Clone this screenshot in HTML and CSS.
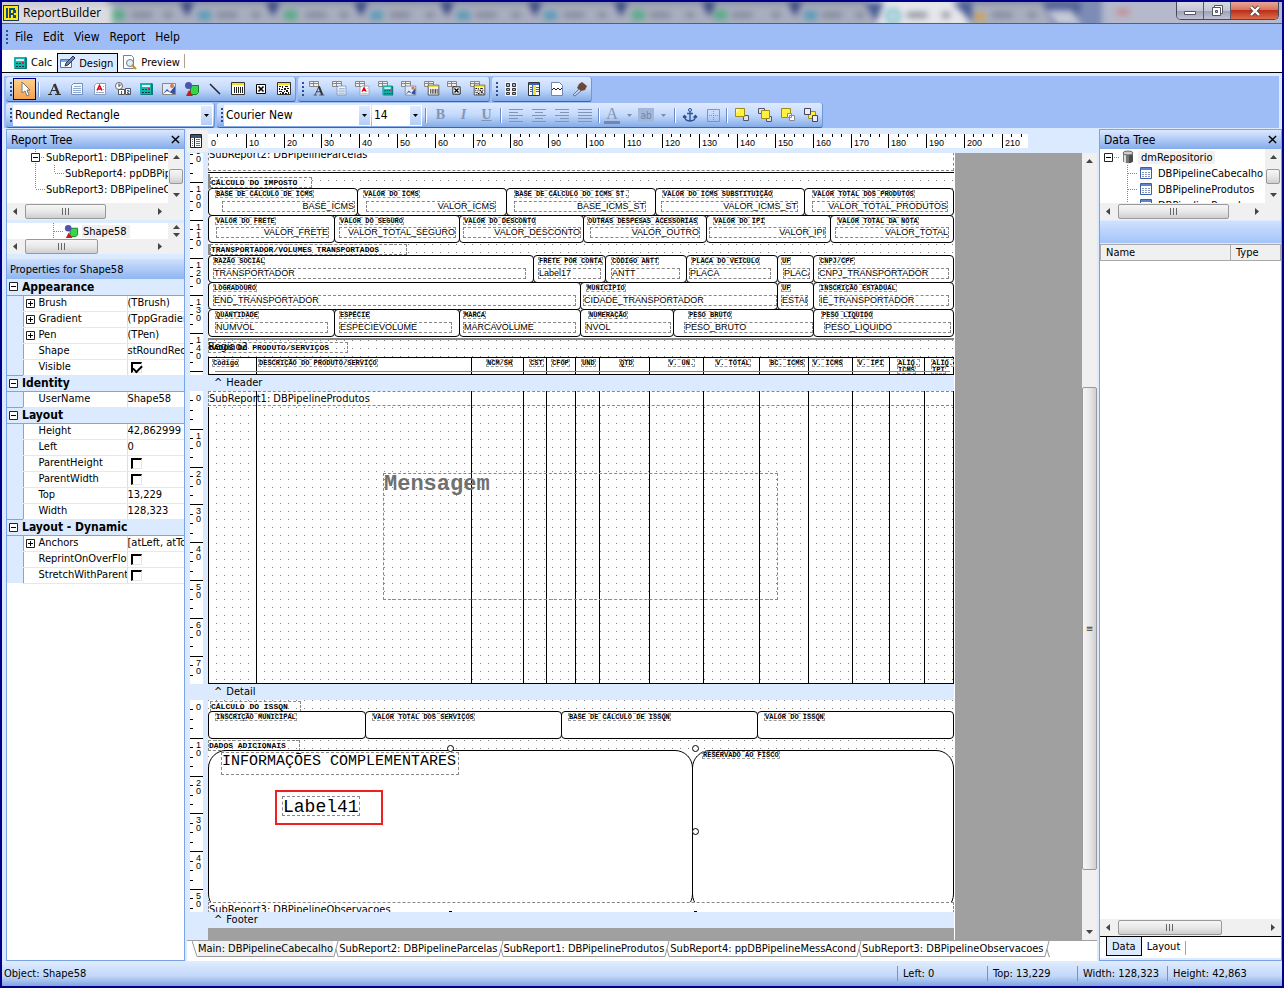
FILE: index.html
```
<!DOCTYPE html>
<html lang="en">
<head>
  <meta charset="UTF-8">
  <meta name="viewport" content="width=device-width, initial-scale=1.0">
  <title>ReportBuilder</title>
  <link rel="stylesheet" href="styles.css">
</head>
<body>
  <svg class="sprite" aria-hidden="true">
    <symbol id="i-cursor" viewBox="0 0 16 16"><path d="M5 1v11l3-2 2 5 2-1-2-5h3z" fill="#fff" stroke="#777" /></symbol>
    <symbol id="i-a" viewBox="0 0 16 16"><path d="M2 13.500h4M9 13.500h6M4 13L8.500 3l4 10M5.500 9.500h5" fill="none" stroke="#333"/><path d="M8.500 3l4 10" stroke="#333" stroke-width="2.500"/></symbol>
    <symbol id="i-memo" viewBox="0 0 16 16"><path d="M4.500 2.500h9v11h-11v-9z" fill="#f4f8ff" stroke="#7390bd"/><path d="M5 5.500h7M4 7.500h8M4 9.500h8M4 11.500h8" stroke="#8fa9d0"/></symbol>
    <symbol id="i-rich" viewBox="0 0 16 16"><path d="M4.500 2.500h9v11h-11v-9z" fill="#fff" stroke="#8c9cb8"/><path d="M4 11.500h8M11 5.500h1M11 8.500h1" stroke="#8fa9d0"/><path d="M5 9.500l2.500-5 2.500 5M6 8h3" fill="none" stroke="#e00010" stroke-width="1.500"/></symbol>
    <symbol id="i-sys" viewBox="0 0 16 16"><circle cx="4" cy="5" r="3.500" fill="#fff" stroke="#666"/><path d="M4 2.500v3l2-2" fill="none" stroke="#333"/><path d="M3.500 8.500h6v5h-6zM10.500 7.500h5v6h-5z" fill="#fff" stroke="#555"/><path d="M6.500 10v3M12 9.500h2v1.500h-1.500v1.500h2" fill="none" stroke="#1d63b5"/></symbol>
    <symbol id="i-calc" viewBox="0 0 16 16"><path d="M2 2h12l1 1v11H3l-1-1z" fill="#0a7c7c"/><path d="M2 2h11v11H2z" fill="#16b3b0"/><path d="M4 4h8v2H4z" fill="#d8fff5"/><path d="M4 8h2v1H4zm3 0h2v1H7zM4 11h2v1H4zm3 0h2v1H7zm3 0h2v1h-2z" fill="#02383c"/><path d="M10 7h2v2h-2z" fill="#e02020"/></symbol>
    <symbol id="i-image" viewBox="0 0 16 16"><path d="M1.500 2.500h13v11h-13z" fill="#dfeaff" stroke="#888"/><path d="M2 13l4-5 3 3 5-6v8z" fill="#37539c"/><path d="M2 13l4-3 6 3z" fill="#fff"/><circle cx="11" cy="5" r="2" fill="#e7763a"/></symbol>
    <symbol id="i-shape" viewBox="0 0 16 16"><path d="M6.500 4.500h8v7l-2 2h-6z" fill="#35d64b" stroke="#1b7b2a"/><circle cx="4.500" cy="4.500" r="3.500" fill="#4c55ad"/><path d="M5 9l4 6H2z" fill="#d01818"/></symbol>
    <symbol id="i-line" viewBox="0 0 16 16"><path d="M3 3l10 10" stroke="#223" stroke-width="1.500"/></symbol>
    <symbol id="i-bar" viewBox="0 0 16 16"><path d="M1.500 1.500h13v12h-13z" fill="#fff" stroke="#333"/><path d="M2 2h12v2H2z" fill="#f3e02c"/><path d="M4.500 6v6M6.500 6v6M8.500 6v6M10.500 6v6M12.500 6v6" stroke="#222"/></symbol>
    <symbol id="i-xbox" viewBox="0 0 16 16"><path d="M3.500 3.500h9v9h-9z" fill="#fff" stroke="#000"/><path d="M5.500 5.500l5 5M10.500 5.500l-5 5" stroke="#000" stroke-width="1.600"/></symbol>
    <symbol id="i-qr" viewBox="0 0 16 16"><path d="M1.500 1.500h13v12h-13z" fill="#fff" stroke="#333"/><path d="M2 2h12v2H2z" fill="#f3e02c"/><path d="M3 5h2v1H3zm3 0h1v2H6zm3 0h3v1H9zM3 7h1v2H3zm2 1h2v1H5zm3-1h2v2H8zm3 0h2v1h-2zM3 10h3v1H3zm5 0h1v1H8zm2-1h2v2h-2zM4 12h1v1H4zm2-1h2v2H6zm3 1h2v1H9zm3-1h1v2h-1z" fill="#111"/></symbol>
    <symbol id="i-db" viewBox="0 0 16 16"><path d="M.500 .500h9v5h-9zM.500 2.500h9M4.500 .500v5" fill="#eee" stroke="#888"/></symbol>
    <symbol id="i-props" viewBox="0 0 16 16"><path d="M2 1h12v14H2z" fill="#edf2fc"/><path d="M3.500 2.500h3v3h-3zM3.500 7.500h3v2h-3zM3.500 11.500h3v2h-3zM9.500 2.500h3v3h-3zM9.500 7.500h3v2h-3zM9.500 11.500h3v2h-3z" fill="#a7bce3" stroke="#333"/></symbol>
    <symbol id="i-tree" viewBox="0 0 16 16"><path d="M2.500 1.500h11v13h-11z" fill="#fff" stroke="#333"/><path d="M3 2h10v2H3z" fill="#2f69b5"/><path d="M7 4h3v10H7z" fill="#f5e040"/><path d="M4 6.500h2M4 8.500h2M4 10.500h2M10 6.500h3M10 8.500h3M10 10.500h3M6.500 4v10" stroke="#346bb1"/></symbol>
    <symbol id="i-page" viewBox="0 0 16 16"><path d="M2.500 1.500h8l3 3v10h-11z" fill="#fff" stroke="#6d86b4"/><path d="M3 9l2-2 2 2 2-2 2 2 2-2" fill="none" stroke="#222"/></symbol>
    <symbol id="i-brush" viewBox="0 0 16 16"><path d="M7 3l3-2 5 4-2 4-4 1-4-3z" fill="#6b4937"/><path d="M7 8l2 2-6 5-2-1z" fill="#c5d1e6" stroke="#66769a"/></symbol>
    <symbol id="i-design" viewBox="0 0 16 16"><path d="M.500 4.500h11v8H.500z" fill="#fff" stroke="#4575bd"/><path d="M1 5h10v2H1z" fill="#7ba7df"/><path d="M5 11l1-3 7-7 2 2-7 7z" fill="#6387bf" stroke="#335"/></symbol>
    <symbol id="i-preview" viewBox="0 0 16 16"><path d="M1.500 .500h8l2 2v11h-10z" fill="#fff" stroke="#6d7fa8"/><circle cx="8" cy="8" r="3.500" fill="#dff0f8" stroke="#777"/><path d="M10 10l4 4" stroke="#c5902a" stroke-width="2"/></symbol>
    <symbol id="i-left" viewBox="0 0 16 16"><path d="M1 2.500h14M1 5.500h9M1 8.500h14M1 11.500h9M1 14.500h14" stroke="#8295b5"/></symbol>
    <symbol id="i-center" viewBox="0 0 16 16"><path d="M1 2.500h14M4 5.500h8M1 8.500h14M4 11.500h8M1 14.500h14" stroke="#8295b5"/></symbol>
    <symbol id="i-right" viewBox="0 0 16 16"><path d="M1 2.500h14M6 5.500h9M1 8.500h14M6 11.500h9M1 14.500h14" stroke="#8295b5"/></symbol>
    <symbol id="i-just" viewBox="0 0 16 16"><path d="M1 2.500h14M1 5.500h14M1 8.500h14M1 11.500h14M1 14.500h14" stroke="#8295b5"/></symbol>
    <symbol id="i-anchor" viewBox="0 0 16 16"><circle cx="8" cy="3" r="1.500" fill="none" stroke="#2d4f93"/><path d="M8 5v9M5 6.500h6M2.500 9c0 3 2 5 5.500 5s5.500-2 5.500-5M1 10.500l1.500-2 2 2M11.500 10.500l2-2 1.500 2" fill="none" stroke="#2d4f93" stroke-width="1.300"/></symbol>
    <symbol id="i-border" viewBox="0 0 16 16"><path d="M2.500 2.500h12v12h-12z" fill="none" stroke="#8295b5"/><path d="M8.500 4v9M4 8.500h9" stroke="#8295b5" stroke-dasharray="1 1"/></symbol>
    <symbol id="i-front" viewBox="0 0 16 16"><path d="M9.500 8.500h5v5h-5z" fill="#dbe3f2" stroke="#556"/><path d="M1.500 1.500h9v8h-9z" fill="#fff23a" stroke="#a08c1a"/><path d="M2 2h4L2 6z" fill="#fffbc0"/></symbol>
    <symbol id="i-forward" viewBox="0 0 16 16"><path d="M1.500 1.500h6v5h-6zM9.500 9.500h5v5h-5z" fill="#dbe3f2" stroke="#556"/><path d="M4.500 3.500h8v8h-8z" fill="#fff23a" stroke="#a08c1a"/></symbol>
    <symbol id="i-backward" viewBox="0 0 16 16"><path d="M1.500 1.500h9v9h-9z" fill="#fff23a" stroke="#a08c1a"/><path d="M7.500 6.500h4v4h-4zM9.500 8.500h5v5h-5z" fill="#fff" stroke="#889"/></symbol>
    <symbol id="i-back" viewBox="0 0 16 16"><path d="M5.500 4.500h7v7h-7z" fill="#fff23a" stroke="#a08c1a"/><path d="M1.500 1.500h6v6h-6zM9.500 8.500h5v6h-5z" fill="#e8eefa" stroke="#445"/></symbol>
    <symbol id="i-table" viewBox="0 0 12 12"><path d="M.500 .500h11v11H.500z" fill="#fff" stroke="#3c5fa8"/><path d="M1 1h10v2H1z" fill="#5c84cf"/><path d="M2 5.500h8M2 7.500h8M2 9.500h8" stroke="#8497bd" stroke-dasharray="2 1"/></symbol>
    <symbol id="i-cylinder" viewBox="0 0 12 14"><path d="M1 3v8c0 3 10 3 10 0V3z" fill="#777"/><path d="M3 4v9" stroke="#ddd" stroke-width="2"/><path d="M8 5v8M10 5v7" stroke="#222"/><ellipse cx="6" cy="3" rx="5" ry="2" fill="#ccc" stroke="#666"/></symbol>
    <symbol id="i-down" viewBox="0 0 7 4"><path d="M0 0h7L3.500 4z"/></symbol>
    <symbol id="i-up" viewBox="0 0 7 4"><path d="M0 4h7L3.500 0z"/></symbol>
    <symbol id="i-prev" viewBox="0 0 4 7"><path d="M4 0v7L0 3.500z"/></symbol>
    <symbol id="i-next" viewBox="0 0 4 7"><path d="M0 0v7l4-3.500z"/></symbol>
    <symbol id="i-close" viewBox="0 0 10 10"><path d="M1 1l8 8M9 1L1 9" stroke="#000" stroke-width="1.600"/></symbol>
    <symbol id="i-grab" viewBox="0 0 8 7"><path d="M.500 0v7M3.500 0v7M6.500 0v7" stroke="#666"/></symbol>
    <symbol id="i-minus" viewBox="0 0 9 9"><path d="M.500 .500h8v8h-8z" fill="#fff" stroke="#222"/><path d="M2 4.500h5" stroke="#000"/></symbol>
    <symbol id="i-plus" viewBox="0 0 9 9"><path d="M.500 .500h8v8h-8z" fill="#fff" stroke="#222"/><path d="M2 4.500h5M4.500 2v5" stroke="#000"/></symbol>
  </svg>

  <div class="window">
    <header class="titlebar">
      <svg class="glass" viewBox="0 0 1280 21" preserveAspectRatio="none" aria-hidden="true">
        <g class="glass-blur">
          <path d="M-10-10h1300v40H-10z" fill="#a9aebf"/>
          <path d="M-10-10h120v40H-10z" fill="#dcdce0"/>
          <path d="M-10-10h1300v12H-10z" fill="#858a9c"/>
          <path d="M-10-10h115v14H-10z" fill="#c9cad2"/>
          <path d="M178 0h14l-7 15zM264 0h14l-7 15zM352 0h14l-7 15zM438 0h14l-7 15zM526 0h14l-7 15zM612 0h14l-7 15zM700 0h14l-7 15zM786 0h14l-7 15z" fill="#35447e"/>
          <path d="M864-5h92l12 30H876z" fill="#e6e7ea"/>
          <path d="M862 0h20l-8 20zM950 0h20v20zM1040 0h60v30h-45z" fill="#4a5d95"/>
          <path d="M1080 0h70v30h-80z" fill="#7d8cb5"/><path d="M1045 8h25l10 16h-25z" fill="#c5c9d6"/>
          <path d="M1100-5h190v35h-190z" fill="#b5b9cb"/>
          <path d="M1115 7h12v6h-12z" fill="#c5888e"/>
          <path d="M110 8h13v10h-13zM282 8h13v10h-13zM630 8h13v10h-13zM712 8h13v10h-13z" fill="#5bab86"/>
          <path d="M196 9h13v9h-13zM368 9h13v9h-13zM455 9h13v9h-13zM542 9h13v9h-13zM802 9h13v9h-13z" fill="#5b9ab7"/>
          <circle cx="891" cy="14" r="6" fill="none" stroke="#73bdca" stroke-width="4"/>
          <path d="M973 11h10v8h-10z" fill="#d1a34e"/>
          <path d="M130 13h20M215 13h20M304 13h20M388 13h20M474 13h20M562 13h20M648 13h20M730 13h20M820 13h20M905 13h20M990 13h20M162 13h8M250 13h8M338 13h8M424 13h8M510 13h8M596 13h8M684 13h8M770 13h8M854 13h8M940 13h8M1026 13h8" stroke="#7f8494" stroke-width="5"/>
        </g>
      </svg>
      <svg class="app-icon" viewBox="0 0 16 16" aria-hidden="true"><path d="M0 0h16v16H0z" fill="#123a63"/><path d="M1 1h14v14H1z" fill="#ffe818"/><path d="M3 3h2v10H3zM6 3h6v2H6zM10 5h3v3h-3zM6 8h5v2H6zM6 3h2v10H6zM10 10h3v3h-3z" fill="#134a80"/></svg>
      <h1 class="title">ReportBuilder</h1>
      <div class="window-buttons">
        <button class="win-btn" aria-label="Minimize"><svg viewBox="0 0 14 12"><path d="M1.500 6.500h11v3h-11z" fill="#fff" stroke="#556"/></svg></button>
        <button class="win-btn" aria-label="Restore"><svg viewBox="0 0 14 12"><path d="M4.500 .500h8v8h-8z" fill="#fff" stroke="#556"/><path d="M2.500 2.500h8v8h-8z" fill="#fff" stroke="#556"/><path d="M5.500 5.500h2v2h-2z" fill="#aab" stroke="#556"/></svg></button>
        <button class="win-btn win-close" aria-label="Close"><svg viewBox="0 0 14 12"><path d="M3 2l8 8M11 2l-8 8" stroke="#544" stroke-width="4"/><path d="M3 2l8 8M11 2l-8 8" stroke="#fff" stroke-width="2.400"/></svg></button>
      </div>
    </header>

    <nav class="menubar">
      <span class="grip"></span>
      <button>File</button><button>Edit</button><button>View</button><button>Report</button><button>Help</button>
    </nav>

    <nav class="view-tabs">
      <button class="view-tab"><svg class="icon"><use href="#i-calc"/></svg>Calc</button>
      <button class="view-tab active"><svg class="icon"><use href="#i-design"/></svg>Design</button>
      <button class="view-tab"><svg class="icon"><use href="#i-preview"/></svg>Preview</button>
      <span class="tab-end"></span>
    </nav>

    <div class="toolbars">
      <div class="toolbar-row">
        <div class="toolbar">
          <span class="grip"></span>
          <button class="tool selected" aria-label="Select"><svg class="icon"><use href="#i-cursor"/></svg></button>
          <span class="sep"></span>
          <div class="tools" data-icons="a memo rich sys calc image shape line bar xbox qr"></div>
        </div>
        <div class="toolbar">
          <span class="grip"></span>
          <div class="tools" data-bound="true" data-icons="a memo rich calc image bar xbox qr"></div>
        </div>
        <div class="toolbar">
          <span class="grip"></span>
          <div class="tools" data-icons="props tree page brush"></div>
        </div>
      </div>
      <div class="toolbar-row">
        <div class="toolbar">
          <span class="grip"></span>
          <div class="combo combo-wide">
            <select aria-label="Object value"><option>Rounded Rectangle</option></select>
            <span class="combo-arrow"><svg class="arrow-v"><use href="#i-down"/></svg></span>
          </div>
        </div>
        <div class="toolbar">
          <span class="grip"></span>
          <div class="combo combo-font">
            <select aria-label="Font name"><option>Courier New</option></select>
            <span class="combo-arrow"><svg class="arrow-v"><use href="#i-down"/></svg></span>
          </div>
          <div class="combo combo-size">
            <select aria-label="Font size"><option>14</option></select>
            <span class="combo-arrow"><svg class="arrow-v"><use href="#i-down"/></svg></span>
          </div>
          <span class="sep"></span>
          <button class="tool letter bold">B</button><button class="tool letter italic">I</button><button class="tool letter underline">U</button>
          <span class="sep"></span>
          <div class="tools" data-icons="left center right just"></div>
          <span class="sep"></span>
          <button class="tool letter swatch">A</button>
          <button class="drop" aria-label="Font color"><svg class="arrow-v"><use href="#i-down"/></svg></button>
          <button class="tool highlight">ab</button>
          <button class="drop" aria-label="Highlight color"><svg class="arrow-v"><use href="#i-down"/></svg></button>
          <span class="sep"></span>
          <div class="tools" data-icons="anchor border"></div>
          <span class="sep"></span>
          <div class="tools" data-icons="front forward backward back"></div>
        </div>
      </div>
    </div>

    <main class="main">
      <aside class="panel">
        <h2 class="panel-title">Report Tree <button class="close" aria-label="Close Report Tree"><svg><use href="#i-close"/></svg></button></h2>
        <div class="tree-wrap">
          <div class="tree">
            <div class="node"><svg class="branch branch-1"><path d="M8.500 0v16M12 8.500h6"/><use href="#i-minus" x="4" y="4" width="9" height="9"/></svg>SubReport1: DBPipelineProdutos</div>
            <div class="node"><svg class="branch branch-2"><path d="M8.500 0v16M27.500 0v8M28 8.500h9"/></svg>SubReport4: ppDBPipelineMessAcond</div>
            <div class="node"><svg class="branch branch-1"><path d="M8.500 0v8M9 8.500h9"/></svg>SubReport3: DBPipelineObservacoes</div>
          </div>
          <div class="vscroll"><svg class="arrow-v"><use href="#i-up"/></svg><span class="thumb thumb-v"></span><svg class="arrow-v"><use href="#i-down"/></svg></div>
        </div>
        <div class="hscroll"><svg class="arrow-h"><use href="#i-prev"/></svg><span class="thumb thumb-s"><svg class="grab"><use href="#i-grab"/></svg></span><svg class="arrow-h"><use href="#i-next"/></svg></div>
        <div class="tree-wrap object-tree">
          <div class="tree">
            <div class="node"><svg class="branch branch-3"><path d="M8.500 0v16M9 8.500h10"/></svg><svg class="icon icon-s"><use href="#i-shape"/></svg><span class="node-selected">Shape58</span></div>
          </div>
          <div class="vscroll"><svg class="arrow-v"><use href="#i-up"/></svg><svg class="arrow-v"><use href="#i-down"/></svg></div>
        </div>
        <div class="hscroll hscroll-last"><svg class="arrow-h"><use href="#i-prev"/></svg><span class="thumb thumb-s"><svg class="grab"><use href="#i-grab"/></svg></span><svg class="arrow-h"><use href="#i-next"/></svg></div>
        <h2 class="panel-title props-title">Properties for Shape58</h2>
        <table class="props">
          <colgroup><col class="c-gutter"><col class="c-name"><col></colgroup>
          <tbody id="props"></tbody>
        </table>
        <div class="filler"></div>
      </aside>

      <section class="designer">
        <div class="ruler-row">
          <div class="corner"><svg class="icon" viewBox="0 0 16 16"><path d="M2.500 1.500h11v13h-11z" fill="#fff" stroke="#222"/><path d="M3 2h10v3H3z" fill="#33557d"/><path d="M6.500 5v9" stroke="#222"/><path d="M8 6.500h4M8 8.500h4M8 10.500h4M8 12.500h4M4 6.500h1M4 8.500h1M4 10.500h1M4 12.500h1" stroke="#2d7ad0"/></svg></div>
          <div class="hruler" id="hruler"></div>
        </div>
        <div class="workspace">
          <div class="bands">
            <div class="band"><div class="vruler" data-origin="-349"></div><div class="sheet sheet-header" id="header-band"></div></div>
            <div class="band-bar">^<span>Header</span></div>
            <div class="band"><div class="vruler" data-origin="0"></div><div class="sheet sheet-detail" id="detail-band"></div></div>
            <div class="band-bar">^<span>Detail</span></div>
            <div class="band"><div class="vruler" data-origin="0"></div><div class="sheet sheet-footer" id="footer-band"></div></div>
            <div class="band-bar">^<span>Footer</span></div>
            <div class="band-rest"></div>
          </div>
          <div class="outside"></div>
          <div class="vscroll vscroll-main"><svg class="arrow-v"><use href="#i-up"/></svg><span class="thumb thumb-main">≡</span><svg class="arrow-v"><use href="#i-down"/></svg></div>
        </div>
        <nav class="doc-tabs" id="doc-tabs"></nav>
      </section>

      <aside class="panel">
        <h2 class="panel-title">Data Tree <button class="close" aria-label="Close Data Tree"><svg><use href="#i-close"/></svg></button></h2>
        <div class="tree-wrap">
          <div class="tree">
            <div class="node"><svg class="branch branch-root"><path d="M12 8.500h8"/><use href="#i-minus" x="4" y="4" width="9" height="9"/></svg><svg class="cylinder"><use href="#i-cylinder"/></svg><span class="node-selected">dmRepositorio</span></div>
            <div class="node"><svg class="branch branch-data"><path d="M27.500 0v16M28 8.500h10"/></svg><svg class="table-icon"><use href="#i-table"/></svg>DBPipelineCabecalho</div>
            <div class="node"><svg class="branch branch-data"><path d="M27.500 0v16M28 8.500h10"/></svg><svg class="table-icon"><use href="#i-table"/></svg>DBPipelineProdutos</div>
            <div class="node"><svg class="branch branch-data"><path d="M27.500 0v16M28 8.500h10"/></svg><svg class="table-icon"><use href="#i-table"/></svg>DBPipelineParcelas</div>
          </div>
          <div class="vscroll"><svg class="arrow-v"><use href="#i-up"/></svg><span class="thumb thumb-v"></span><svg class="arrow-v"><use href="#i-down"/></svg></div>
        </div>
        <div class="hscroll"><svg class="arrow-h"><use href="#i-prev"/></svg><span class="thumb thumb-m"><svg class="grab"><use href="#i-grab"/></svg></span><svg class="arrow-h"><use href="#i-next"/></svg></div>
        <div class="fields-title"></div>
        <table class="fields"><thead><tr><th class="c-field">Name</th><th>Type</th></tr></thead></table>
        <div class="filler"></div>
        <div class="hscroll hscroll-wide"><svg class="arrow-h"><use href="#i-prev"/></svg><span class="thumb thumb-l"><svg class="grab"><use href="#i-grab"/></svg></span><svg class="arrow-h"><use href="#i-next"/></svg></div>
        <nav class="data-tabs"><button class="active">Data</button><button>Layout</button><span class="tab-end"></span></nav>
      </aside>
    </main>

    <footer class="statusbar">
      <span class="status-object">Object: Shape58</span>
      <span class="status">Left: 0</span>
      <span class="status">Top: 13,229</span>
      <span class="status">Width: 128,323</span>
      <span class="status status-last">Height: 42,863</span>
    </footer>
  </div>
  <script src="script.js"></script>
</body>
</html>
```
FILE: styles.css
```
* {
  box-sizing: border-box;
}

body {
  margin: 0;
  font-family: "DejaVu Sans Condensed", "DejaVu Sans", sans-serif;
  font-size: 11px;
  color: #000;
}

button {
  font: inherit;
  color: inherit;
  background: none;
  border: 0;
  padding: 0;
}

h1, h2 {
  margin: 0;
  font-weight: normal;
}

svg {
  display: block;
  flex: none;
}

.sprite {
  position: absolute;
  width: 0;
  height: 0;
}

.icon {
  width: 16px;
  height: 16px;
}

.window {
  display: flex;
  flex-direction: column;
  height: 100vh;
  overflow: hidden;
  border: 2px solid #00008b;
  background: #dbeaff;
}

/* title bar */

.titlebar {
  position: relative;
  display: flex;
  align-items: center;
  height: 22px;
  padding-left: 1px;
  border-bottom: 1px solid #555f78;
  overflow: hidden;
}

.glass {
  position: absolute;
  left: 0;
  top: 0;
  width: 100%;
  height: 21px;
}

.glass-blur {
  filter: blur(3px);
}

.app-icon {
  position: relative;
  width: 16px;
  height: 16px;
}

.title {
  position: relative;
  margin-left: 4px;
  font-family: "Open Sans", "Noto Sans", sans-serif;
  font-size: 12px;
}

.window-buttons {
  position: relative;
  align-self: flex-start;
  display: flex;
  margin-left: auto;
  margin-right: 3px;
  border: 1px solid #444a5a;
  border-top: 0;
  border-radius: 0 0 5px 5px;
  overflow: hidden;
}

.win-btn {
  display: flex;
  align-items: center;
  justify-content: center;
  width: 27px;
  height: 17px;
  border-right: 1px solid #555b6e;
  background: linear-gradient(#d9dbe3, #c4c7d3 50%, #9ba0b4 51%, #c0c4d4);
}

.win-btn svg {
  width: 14px;
  height: 12px;
}

.win-close {
  width: 47px;
  border-right: 0;
  background: linear-gradient(#e8a898, #d9705c 48%, #bb3016 50%, #dc6b4c);
}

/* menu and view tabs */

.menubar {
  display: flex;
  align-items: center;
  gap: 10px;
  height: 26px;
  padding-left: 4px;
  font-size: 12px;
  background: #9ebcf5;
  border-bottom: 1px solid #b9bfc9;
}

.menubar .grip {
  margin-right: -3px;
}

.grip {
  flex: none;
  width: 2px;
  height: 14px;
  background: repeating-linear-gradient(#2b4f91 0 2px, transparent 2px 4px);
}

.view-tabs {
  display: flex;
  align-items: flex-end;
  height: 23px;
  padding-left: 4px;
  background: #fff;
  border-bottom: 1px solid #000;
}

.view-tab {
  display: flex;
  align-items: center;
  gap: 3px;
  height: 19px;
  padding: 0 4px;
}

.view-tab:first-child {
  padding: 0 5px 0 6px;
}

.view-tab.active {
  padding: 0 4px 0 2px;
  background: #dbeaff;
  border: 1px solid #000;
  border-bottom: 0;
}

.tab-end {
  align-self: center;
  width: 1px;
  height: 14px;
  background: #a7a592;
}

/* toolbars */

.toolbars {
  display: flex;
  flex-direction: column;
  gap: 1px;
  margin: 3px 3px 0 2px;
  padding: 1px 0 0 2px;
  background: #9ebcf5;
}

.toolbar-row {
  display: flex;
  gap: 2px;
}

.toolbar {
  display: flex;
  align-items: center;
  height: 25px;
  padding-left: 4px;
  border-bottom: 1px solid #3c65a8;
  border-right: 1px solid #6f96d6;
  border-radius: 3px;
  background: linear-gradient(#dfebff, #c3d9fb 50%, #84abe6);
}

.toolbar .grip {
  margin-right: 1px;
}

.tools {
  display: flex;
}

.tool {
  display: flex;
  align-items: center;
  justify-content: center;
  width: 23px;
  height: 22px;
}

.tool.selected {
  border: 1px solid #000080;
  background: linear-gradient(#fbd08c, #f5a24f);
}

.sep {
  width: 2px;
  height: 15px;
  margin: 0 2px;
  border-left: 1px solid #6a8ccb;
  border-right: 1px solid #fff;
}

.letter {
  font-family: "Liberation Serif", serif;
  font-size: 14px;
  font-weight: bold;
  color: #8295b5;
}

.italic {
  font-style: italic;
}

.underline {
  text-decoration: underline;
}

.swatch {
  width: 16px;
  height: 18px;
  margin-left: 2px;
  font-size: 16px;
  font-weight: normal;
  border-bottom: 3px solid #7288ad;
}

.drop {
  display: flex;
  align-items: center;
  justify-content: center;
  width: 18px;
  height: 20px;
  fill: #7e8ca7;
}

.drop .arrow-v {
  width: 5px;
  height: 3px;
}

.highlight {
  width: 16px;
  height: 14px;
  font-size: 10px;
  color: #7086ad;
  background: #a3b7da;
}

.combo {
  position: relative;
  height: 21px;
  margin-right: 1px;
}

.combo select {
  width: 100%;
  height: 100%;
  padding: 0 18px 0 2px;
  border: 0;
  border-radius: 0;
  appearance: none;
  background: #fff;
  color: #000;
  font: inherit;
  font-size: 12px;
}

.combo-wide {
  width: 200px;
}

.combo-font {
  width: 147px;
}

.combo-size {
  width: 50px;
}

.combo-arrow {
  position: absolute;
  right: 1px;
  top: 1px;
  display: flex;
  align-items: center;
  justify-content: center;
  width: 11px;
  height: 19px;
  background: linear-gradient(#dfebff, #b4cef8);
  pointer-events: none;
}

.arrow-v {
  width: 7px;
  height: 4px;
}

.arrow-h {
  width: 4px;
  height: 7px;
}

.combo-arrow .arrow-v {
  width: 5px;
  height: 3px;
}

/* main area */

.main {
  flex: 1;
  min-height: 0;
  display: grid;
  grid-template-columns: 179px minmax(0, 1fr) 183px;
  gap: 2px;
  margin-top: 1px;
  padding-left: 4px;
}

.panel {
  display: flex;
  flex-direction: column;
  min-height: 0;
  border: 1px solid #7ba4e8;
}

.panel-title {
  display: flex;
  flex: none;
  align-items: center;
  justify-content: space-between;
  height: 19px;
  padding: 0 4px;
  font-size: 12px;
  background: linear-gradient(#dce9ff, #83abea);
}

.close svg {
  width: 9px;
  height: 9px;
}

.props-title {
  height: 20px;
  padding-left: 3px;
  font-size: 11px;
  background: linear-gradient(#cfe0fd, #8fb5f1);
}

.tree-wrap {
  display: flex;
  flex: none;
  height: 54px;
  overflow: hidden;
}

.tree {
  flex: 1;
  min-width: 0;
  background: #fff;
  overflow: hidden;
}

.node {
  display: flex;
  align-items: center;
  height: 16px;
  white-space: nowrap;
}

.branch {
  height: 16px;
  fill: none;
  stroke: #888;
  stroke-dasharray: 1 1;
}

.branch use {
  stroke-dasharray: none;
}

.branch-1 {
  width: 19px;
  margin-left: 20px;
}

.branch-2 {
  width: 38px;
  margin-left: 20px;
}

.branch-3 {
  width: 19px;
  margin-left: 38px;
}

.branch-root {
  width: 20px;
}

.branch-data {
  width: 40px;
}

.icon-s {
  width: 15px;
  height: 15px;
  margin-right: 3px;
}

.node-selected {
  padding: 0 3px;
  background: #f0f0f0;
}

.icon-s + .node-selected {
  padding-left: 1px;
}

.cylinder {
  width: 12px;
  height: 14px;
  margin: 0 4px 0 2px;
}

.table-icon {
  width: 12px;
  height: 12px;
  margin-right: 6px;
}

.vscroll {
  display: flex;
  flex-direction: column;
  flex: none;
  align-items: center;
  justify-content: space-between;
  width: 16px;
  padding: 6px 0;
  background: #f0f0f0;
}

.hscroll {
  display: flex;
  flex: none;
  align-items: center;
  height: 17px;
  padding: 0 22px 0 6px;
  background: #f0f0f0;
}

.hscroll .arrow-h:last-child {
  margin-left: auto;
}

.vscroll svg, .hscroll svg {
  fill: #444;
}

.thumb {
  flex: none;
  display: flex;
  align-items: center;
  justify-content: center;
  border: 1px solid #999;
  border-radius: 2px;
  background: linear-gradient(#f6f6f6, #e8e8e8 50%, #cfcfcf);
  color: #444;
}

.grab {
  width: 8px;
  height: 7px;
}

.hscroll .thumb {
  height: 15px;
  margin-left: 8px;
}

.thumb-v {
  width: 14px;
  height: 15px;
}

.thumb-s {
  width: 81px;
}

.hscroll-last .thumb-s {
  width: 73px;
}

.thumb-m {
  width: 111px;
}

.thumb-l {
  width: 104px;
}

.hscroll-wide {
  padding-right: 6px;
}

.object-tree {
  height: 16px;
  margin-top: 3px;
}

.object-tree .vscroll {
  padding: 2px 0;
}

.hscroll-last {
  height: 15px;
  margin-bottom: 5px;
}

.filler {
  flex: 1;
  min-height: 0;
  background: #fff;
}

.props {
  flex: none;
  width: 100%;
  table-layout: fixed;
  border-collapse: collapse;
  background: #fff;
}

.props tr {
  height: 16px;
}

.props td, .props th {
  height: 16px;
  padding: 0;
  line-height: 14px;
  border-bottom: 1px solid #e8e8e8;
  overflow: hidden;
  white-space: nowrap;
  text-align: left;
  font-weight: normal;
}

.c-gutter {
  width: 16px;
}

.c-name {
  width: 104px;
}

.props .gutter, .props .category {
  background: #dbeaff;
  border-bottom: 0;
}

.props .category {
  font-size: 12px;
  font-weight: bold;
  border-top: 1px solid #a0a0a0;
  border-bottom: 1px solid #a0a0a0;
}

.props tr:first-child .category {
  border-top: 0;
}

.props .name {
  border-left: 1px solid #a0a0a0;
  border-right: 1px solid #e0e0e0;
}

.props .name span, .props .name label, .category span {
  display: flex;
  align-items: center;
  gap: 4px;
  padding-left: 2px;
}

.props .name label, .props .name .plain {
  padding-left: 15px;
}

.props svg {
  width: 9px;
  height: 9px;
}

.props input {
  display: block;
  width: 11px;
  height: 11px;
  margin: 0 0 0 3px;
  appearance: none;
  border: 1px solid #e4e4e4;
  border-top: 2px solid #000;
  border-left: 2px solid #000;
  background: #fff;
}

.props input:checked::before {
  content: "";
  display: block;
  width: 7px;
  height: 4px;
  margin: 1px 0;
  border-left: 2px solid #000;
  border-bottom: 2px solid #000;
  transform: rotate(-45deg);
}

.fields-title {
  flex: none;
  height: 22px;
  margin: 1px 0;
  background: linear-gradient(#cfe1ff, #a4c4f7);
}

.fields {
  flex: none;
  width: 100%;
  border-collapse: collapse;
  background: #f0f0f0;
}

.fields th {
  height: 16px;
  padding: 0 5px;
  border: 1px solid #aaa;
  font-weight: normal;
  text-align: left;
}

.c-field {
  width: 130px;
}

.data-tabs {
  display: flex;
  flex: none;
  height: 24px;
  padding-left: 6px;
  background: #fff;
  border-top: 1px solid #000;
  border-bottom: 2px solid #dbeaff;
}

.data-tabs button {
  height: 19px;
  padding: 0 5px;
}

.data-tabs .active {
  border: 1px solid #000;
  border-top: 0;
  background: #dbeaff;
}

/* designer */

.designer {
  display: flex;
  flex-direction: column;
  min-width: 0;
  min-height: 0;
}

.ruler-row {
  display: flex;
  flex: none;
  align-items: center;
  height: 24px;
}

.corner {
  width: 21px;
  height: 22px;
  padding: 3px 0 0 1px;
  background: #f0f0f0;
}

.hruler {
  position: relative;
  width: 820px;
  height: 14px;
  background: #fff;
  font: 9px "Liberation Sans", sans-serif;
}

.tick, .digit {
  position: absolute;
}

.hruler .tick {
  top: 0;
  width: 1px;
  height: 3px;
  background: #000;
}

.hruler .tick-major {
  height: 14px;
}

.hruler .digit {
  top: 4px;
}

.vruler {
  position: relative;
  flex: none;
  width: 13px;
  margin: 0 5px 0 3px;
  overflow: hidden;
  background: #fff;
  font: 9px/8px "Liberation Sans", sans-serif;
}

.vruler .tick {
  left: 0;
  width: 3px;
  height: 1px;
  background: #000;
}

.vruler .tick-major {
  width: 13px;
}

.vruler .digit {
  left: 6px;
  width: 6px;
  word-break: break-all;
}

.workspace {
  flex: 1;
  min-height: 0;
  display: flex;
}

.bands {
  flex: none;
  display: flex;
  flex-direction: column;
  width: 767px;
}

.band {
  display: flex;
}

.band-bar {
  height: 16px;
  padding-left: 27px;
  line-height: 16px;
}

.band-bar span {
  margin-left: 4px;
}

.band-rest {
  flex: 1;
  margin-left: 21px;
  background: #a0a0a0;
}

.outside {
  flex: 1;
  background: #a0a0a0;
  border-left: 1px solid #fff;
}

.vscroll-main {
  width: 15px;
}

.thumb-main {
  width: 15px;
  height: 483px;
  margin-top: 217px;
  margin-bottom: 53px;
  background: linear-gradient(90deg, #f6f6f6, #e8e8e8 50%, #cfcfcf);
  font-size: 10px;
}

.sheet {
  position: relative;
  flex: 1;
  overflow: hidden;
  background: #fff conic-gradient(at 1px 1px, transparent 75%, #808080 0);
  background-size: 8px 8px;
}

.sheet-header {
  height: 222px;
  background-position: 0 3px;
}

.sheet-detail {
  height: 293px;
}

.sheet-footer {
  height: 212px;
}

.sheet > div {
  position: absolute;
  white-space: nowrap;
}

.shape {
  border: 1px solid #000;
  border-radius: 4px;
  background: #fff;
}

.shape-big {
  border-radius: 18px;
}

.column {
  border-radius: 0;
}

.rule {
  background: #000;
}

.rule-gray {
  background: #888;
}

.field {
  border: 1px dashed #888;
  font: 9px/8px "Liberation Sans", sans-serif;
  overflow-x: clip;
  overflow-y: visible;
}

.field.end {
  text-align: right;
}

.caption {
  height: 8px;
  border: 1px dashed #999;
  font: bold 7px/6px "Liberation Mono", monospace;
}

.heading {
  height: 11px;
  border: 1px dashed #888;
  font: bold 8px/10px "Liberation Mono", monospace;
}

.subreport {
  border: 1px dashed #888;
  background: #fff;
  line-height: 13px;
}

.region-name {
  line-height: 12px;
}

.message {
  border: 1px dashed #888;
  font: bold 22px/22px "Liberation Mono", monospace;
  color: #707070;
}

.info {
  border: 1px dashed #888;
  font: 15px/18px "Liberation Mono", monospace;
}

.new-label {
  border: 1px dashed #888;
  font: 18px/20px "Liberation Mono", monospace;
}

.marker {
  border: 2px solid #f02020;
}

.handle {
  border: 1px solid #000;
  border-radius: 50%;
  background: #fff;
}

/* bottom tabs and status */

.doc-tabs {
  display: flex;
  flex: none;
  height: 21px;
  padding-left: 5px;
  background: #fff;
  border-top: 1px solid #a0a0a0;
}

.doc-tab {
  height: 16px;
  border-bottom: 1px solid #999;
}

.doc-tab.active {
  background: #f0f0f0;
}

.slant {
  width: 6px;
  height: 16px;
  fill: none;
  stroke: #999;
}

.statusbar {
  display: flex;
  flex: none;
  align-items: center;
  height: 25px;
  background: linear-gradient(#e0ecff, #c3d8fa 60%, #7fa5e0);
}

.status-object {
  flex: 1;
  padding-left: 2px;
}

.status {
  width: 90px;
  padding-left: 5px;
  border-left: 1px solid #6f93d6;
  line-height: 15px;
}

.status-last {
  width: 115px;
}
```
FILE: script.js
```
const svgIcon = (name) => `<use href="#i-${name}"/>`;

// toolbar buttons; data-bound ones carry a small table behind the icon
document.querySelectorAll(".tools").forEach((el) => {
  const bound = el.dataset.bound;
  el.innerHTML = el.dataset.icons.split(" ").map((name) => {
    const body = bound
      ? `${svgIcon("db")}<use href="#i-${name}" x="3" y="3" width="13" height="13"/>`
      : svgIcon(name);
    return `<button class="tool" aria-label="${name}"><svg class="icon" viewBox="0 0 16 16">${body}</svg></button>`;
  }).join("");
});

// property grid
const props = [
  ["Appearance"],
  ["Brush", "(TBrush)", "+"],
  ["Gradient", "(TppGradient)", "+"],
  ["Pen", "(TPen)", "+"],
  ["Shape", "stRoundRect"],
  ["Visible", true],
  ["Identity"],
  ["UserName", "Shape58"],
  ["Layout"],
  ["Height", "42,862999"],
  ["Left", "0"],
  ["ParentHeight", false],
  ["ParentWidth", false],
  ["Top", "13,229"],
  ["Width", "128,323"],
  ["Layout - Dynamic"],
  ["Anchors", "[atLeft, atTop]", "+"],
  ["ReprintOnOverFlow", false],
  ["StretchWithParent", false],
];

document.getElementById("props").innerHTML = props.map(([name, value, plus]) => {
  if (value === undefined) {
    return `<tr><th class="category" colspan="3"><span><svg>${svgIcon("minus")}</svg>${name}</span></th></tr>`;
  }
  if (typeof value === "boolean") {
    return `<tr><td class="gutter"></td><td class="name"><label for="p-${name}">${name}</label></td>
      <td><input type="checkbox" id="p-${name}" ${value ? "checked" : ""}></td></tr>`;
  }
  const label = plus ? `<span><svg>${svgIcon("plus")}</svg>${name}</span>` : `<span class="plain">${name}</span>`;
  return `<tr><td class="gutter"></td><td class="name">${label}</td><td>${value}</td></tr>`;
}).join("");

// rulers, 10 mm = 37.8 px
const MM10 = 37.8;

function ruler(el, origin, length, side) {
  let html = "";
  for (let i = 0; origin + i * MM10 / 4 < length; i++) {
    const pos = Math.round(origin + i * MM10 / 4);
    if (pos < -20) continue;
    const major = i % 4 === 0;
    if (i > 0) html += `<span class="tick ${major ? "tick-major" : ""}" style="${side}:${pos}px"></span>`;
    if (major) html += `<span class="digit" style="${side}:${pos + 3}px">${i / 4 * 10}</span>`;
  }
  el.innerHTML = html;
}

ruler(document.getElementById("hruler"), 0, 820, "left");
document.querySelectorAll(".vruler").forEach((el) => {
  ruler(el, Number(el.dataset.origin), el.offsetHeight, "top");
});

// report items
function add(band, cls, x, y, w, h, text = "") {
  const el = document.createElement("div");
  el.className = cls;
  el.style.left = x + "px";
  el.style.top = y + "px";
  if (w) el.style.width = w + "px";
  if (h) el.style.height = h + "px";
  el.textContent = text;
  document.getElementById(band + "-band").append(el);
}

function shapeRow(band, y, h, xs) {
  for (let i = 0; i < xs.length - 1; i++) {
    add(band, "shape", xs[i], y, xs[i + 1] - xs[i] + 1, h);
  }
}

function captions(band, y, list) {
  list.forEach(([x, text]) => add(band, "caption", x, y, 0, 0, text));
}

function fields(band, y, list, align = "") {
  list.forEach(([x, w, text]) => add(band, "field " + align, x, y, w, 11, text));
}

add("header", "subreport", 0, -6, 746, 24, "SubReport2: DBPipelineParcelas");
add("header", "rule", 0, 19, 746, 1);
add("header", "rule rule-gray", 0, 21, 2, 14);
add("header", "heading", 2, 24, 102, 0, "CÁLCULO DO IMPOSTO");
shapeRow("header", 35, 28, [0, 149, 298, 447, 596, 745]);
captions("header", 37, [[7, "BASE DE CÁLCULO DE ICMS"], [155, "VALOR DO ICMS"], [306, "BASE DE CÁLCULO DO ICMS ST."], [454, "VALOR DO ICMS SUBSTITUIÇÃO"], [604, "VALOR TOTAL DOS PRODUTOS"]]);
fields("header", 48, [[14, 133, "BASE_ICMS"], [158, 130, "VALOR_ICMS"], [306, 132, "BASE_ICMS_ST"], [453, 137, "VALOR_ICMS_ST"], [604, 136, "VALOR_TOTAL_PRODUTOS"]], "end");
shapeRow("header", 62, 28, [0, 126, 251, 375, 498, 622, 745]);
captions("header", 64, [[7, "VALOR DO FRETE"], [131, "VALOR DO SEGURO"], [255, "VALOR DO DESCONTO"], [379, "OUTRAS DESPESAS ACESSÓRIAS"], [505, "VALOR DO IPI"], [629, "VALOR TOTAL DA NOTA"]]);
fields("header", 74, [[8, 113, "VALOR_FRETE"], [131, 117, "VALOR_TOTAL_SEGURO"], [255, 118, "VALOR_DESCONTO"], [382, 110, "VALOR_OUTRO"], [501, 117, "VALOR_IPI"], [627, 114, "VALOR_TOTAL"]], "end");
add("header", "rule rule-gray", 0, 91, 2, 11);
add("header", "heading", 2, 91, 197, 0, "TRANSPORTADOR/VOLUMES TRANSPORTADOS");
shapeRow("header", 102, 28, [0, 325, 397, 478, 569, 605, 745]);
captions("header", 104, [[5, "RAZÃO SOCIAL"], [330, "FRETE POR CONTA"], [403, "CÓDIGO ANTT"], [483, "PLACA DO VEÍCULO"], [573, "UF"], [611, "CNPJ/CPF"]]);
fields("header", 115, [[5, 313, "TRANSPORTADOR"], [330, 63, "Label17"], [403, 69, "ANTT"], [481, 82, "PLACA"], [575, 27, "PLACA"], [610, 131, "CNPJ_TRANSPORTADOR"]]);
shapeRow("header", 129, 28, [0, 372, 569, 605, 745]);
captions("header", 131, [[5, "LOGRADOURO"], [378, "MUNICÍPIO"], [573, "UF"], [611, "INSCRIÇÃO ESTADUAL"]]);
fields("header", 142, [[5, 363, "END_TRANSPORTADOR"], [375, 194, "CIDADE_TRANSPORTADOR"], [573, 27, "ESTADO"], [611, 130, "IE_TRANSPORTADOR"]]);
shapeRow("header", 156, 28, [0, 126, 251, 372, 465, 605, 745]);
captions("header", 158, [[7, "QUANTIDADE"], [131, "ESPÉCIE"], [255, "MARCA"], [380, "NUMERAÇÃO"], [480, "PESO BRUTO"], [613, "PESO LÍQUIDO"]]);
fields("header", 169, [[7, 113, "NUMVOL"], [131, 113, "ESPECIEVOLUME"], [255, 113, "MARCAVOLUME"], [377, 86, "NVOL"], [476, 129, "PESO_BRUTO"], [616, 127, "PESO_LIQUIDO"]]);
add("header", "rule rule-gray", 0, 185, 746, 2);
add("header", "heading", 0, 189, 140, 0, "DADOS DO PRODUTO/SERVIÇOS");
add("header", "region-name", 0, 188, 0, 0, "Regiao2");

const columns = [0, 48, 263, 315, 338, 367, 391, 441, 495, 551, 600, 644, 681, 716, 745];
columns.slice(0, -1).forEach((x, i) => add("header", "shape column", x, 204, columns[i + 1] - x + 1, 18));
captions("header", 206, [[4, "Código"], [50, "DESCRIÇÃO DO PRODUTO/SERVIÇO"], [278, "NCM/SH"], [321, "CST"], [343, "CFOP"], [373, "UND"], [411, "QTD"], [460, "V. UN."], [507, "V. TOTAL"], [561, "BC. ICMS"], [604, "V. ICMS"], [649, "V. IPI"], [689, "ALIQ."], [723, "ALIQ."]]);
captions("header", 213, [[689, "ICMS"], [723, "IPI"]]);
add("header", "rule rule-gray", 7, 218, 735, 1);

add("detail", "subreport", 0, 0, 746, 15, "SubReport1: DBPipelineProdutos");
columns.forEach((x, i) => add("detail", "rule", x, i ? 0 : 16, 1, 293));
add("detail", "rule", 0, 292, 746, 1);
add("detail", "message", 175, 82, 395, 127, "Mensagem");

add("footer", "heading", 2, 1, 91, 0, "CÁLCULO DO ISSQN");
shapeRow("footer", 11, 28, [0, 157, 353, 549, 745]);
captions("footer", 13, [[7, "INSCRIÇÃO MUNICIPAL"], [164, "VALOR TOTAL DOS SERVIÇOS"], [360, "BASE DE CÁLCULO DE ISSQN"], [556, "VALOR DO ISSQN"]]);
add("footer", "heading", 0, 40, 92, 0, "DADOS ADICIONAIS");
add("footer", "shape shape-big", 0, 50, 485, 162);
add("footer", "shape shape-big", 484, 50, 262, 162);
captions("footer", 51, [[494, "RESERVADO AO FISCO"]]);
add("footer", "info", 13, 52, 238, 23, "INFORMAÇÕES COMPLEMENTARES");
add("footer", "new-label", 74, 96, 78, 20, "Label41");
add("footer", "marker", 67, 90, 108, 35);
add("footer", "subreport", 0, 202, 746, 15, "SubReport3: DBPipelineObservacoes");
[[239, 45], [484, 45], [484, 128]].forEach(([x, y]) => add("footer", "handle", x, y, 7, 7));
add("footer", "rule", 241, 211, 3, 1);
add("footer", "rule", 486, 211, 3, 1);

// report tabs under the designer
const docs = ["Main: DBPipelineCabecalho", "SubReport2: DBPipelineParcelas", "SubReport1: DBPipelineProdutos", "SubReport4: ppDBPipelineMessAcond", "SubReport3: DBPipelineObservacoes"];
document.getElementById("doc-tabs").innerHTML =
  `<svg class="slant"><path d="M0 0l5 15.500h1"/></svg>` +
  docs.map((name, i) => `<button class="doc-tab ${i ? "" : "active"}">${name}</button>
    <svg class="slant"><path d="M0 15.500h1L5 0M3 8l2 7.500h1"/></svg>`).join("");
```
